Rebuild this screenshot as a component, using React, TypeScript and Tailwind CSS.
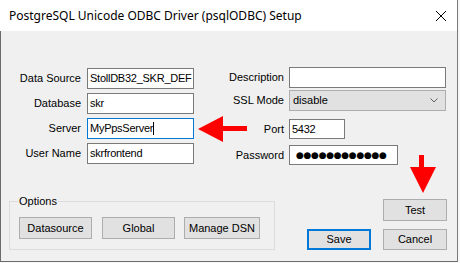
import React from "react";

const ui = "font-['Liberation_Sans',Arial,sans-serif] text-[11px] text-black";

function TextBox({ value, w, focused, caret }: { value: string; w: string; focused?: boolean; caret?: boolean }) {
  return (
    <div
      className={`${w} h-full flex items-center pl-[2px] bg-white border overflow-hidden whitespace-nowrap tracking-[-0.25px] ${
        focused ? "border-[#0078d7]" : "border-[#7a7a7a]"
      }`}
    >
      <span>{value}</span>
      {caret && <span className="inline-block w-px h-[13px] bg-black"></span>}
    </div>
  );
}

function Btn({ label, w, h = "h-[22px]", def }: { label: string; w: string; h?: string; def?: boolean }) {
  return (
    <div
      className={`${w} ${h} flex items-center justify-center bg-[#e1e1e1] ${
        def ? "border-2 border-[#0078d7]" : "border border-[#adadad]"
      }`}
    >
      {label}
    </div>
  );
}

function Label({ text }: { text: string }) {
  return <div className="text-right whitespace-nowrap">{text}</div>;
}

export default function App() {
  return (
    <div className="relative w-[460px] h-[263px] bg-[#f7f7f7] overflow-hidden">
      <div className={`w-[458px] h-[262px] flex flex-col border-r border-[#7a7a7a] ${ui}`}>
        {/* Title bar */}
        <div className="h-[31px] shrink-0 bg-white flex items-center justify-between pl-[9px] pr-[8px]">
          <span className="font-['Noto_Sans',sans-serif] text-[12px] text-black">
            PostgreSQL Unicode ODBC Driver (psqlODBC) Setup
          </span>
          <svg width="12" height="12" viewBox="0 0 12 12" className="mr-[2px]">
            <path d="M1 1 L11 11 M11 1 L1 11" stroke="#000" strokeWidth="1" />
          </svg>
        </div>

        {/* Body */}
        <div className="flex-1 bg-[#f0f0f0] border-l border-b border-[#6b6b6b] flex flex-col">
          <div className="flex pt-[36px]">
            {/* Left column */}
            <div className="ml-[9px] mt-[1px] grid grid-cols-[71px_107px] gap-x-[6px] gap-y-[4px] auto-rows-[21px] items-center">
              <Label text="Data Source" />
              <TextBox value="StollDB32_SKR_DEF" w="w-[107px]" />
              <Label text="Database" />
              <TextBox value="skr" w="w-[107px]" />
              <Label text="Server" />
              <TextBox value="MyPpsServer" w="w-[107px]" focused caret />
              <Label text="User Name" />
              <TextBox value="skrfrontend" w="w-[107px]" />
            </div>

            {/* Right column */}
            <div className="ml-[30px] flex flex-col">
              <div className="h-[21px] flex items-center gap-[5px]">
                <div className="w-[60px] text-right">Description</div>
                <TextBox value="" w="w-[157px]" />
              </div>
              <div className="h-[21px] mt-[2px] flex items-center gap-[5px]">
                <div className="w-[60px] text-right">SSL Mode</div>
                <div className="w-[157px] h-full flex items-center justify-between pl-[3px] pr-[7px] bg-[#e1e1e1] border border-[#adadad]">
                  <span>disable</span>
                  <svg width="8" height="5" viewBox="0 0 8 5">
                    <path d="M0.5 0.5 L4 4 L7.5 0.5" fill="none" stroke="#606060" strokeWidth="1" />
                  </svg>
                </div>
              </div>
              <div className="h-[20px] mt-[8px] flex items-center gap-[5px]">
                <div className="w-[60px] text-right">Port</div>
                <TextBox value="5432" w="w-[56px]" />
              </div>
              <div className="h-[20px] mt-[6px] flex items-center gap-[5px]">
                <div className="w-[60px] text-right">Password</div>
                <div className="w-[109px] h-full flex items-center pl-[6px] bg-white border border-[#7a7a7a] overflow-hidden">
                  <span className="font-['DejaVu_Sans',sans-serif] text-[9px] tracking-[-0.3px] leading-none">
                    ●●●●●●●●●●●●
                  </span>
                </div>
              </div>
            </div>
          </div>

          {/* Bottom area */}
          <div className="flex items-start mt-[34px]">
            <div className="relative ml-[8px] mt-[2px] w-[266px] h-[49px] border border-[#dcdcdc] pl-[9px] pt-[15px]">
              <span className="absolute left-[8px] -top-[7px] px-[1px] bg-[#f0f0f0] leading-[13px]">Options</span>
              <div className="flex">
                <Btn label="Datasource" w="w-[73px]" />
                <div className="ml-[10px]">
                  <Btn label="Global" w="w-[73px]" />
                </div>
                <div className="ml-[9px]">
                  <Btn label="Manage DSN" w="w-[76px]" />
                </div>
              </div>
            </div>
            <div className="ml-[32px] flex flex-col items-end">
              <Btn label="Test" w="w-[64px]" />
              <div className="flex gap-[12px] mt-[8px]">
                <Btn label="Save" w="w-[64px]" h="h-[21px]" def />
                <Btn label="Cancel" w="w-[64px]" h="h-[21px]" />
              </div>
            </div>
          </div>
        </div>
      </div>

      {/* Red annotation arrows */}
      <svg className="absolute inset-0 pointer-events-none" width="460" height="263" viewBox="0 0 460 263">
        <polygon points="198,129 223,116 223,126 247,126 247,131 223,131 223,142" fill="#ff0000" />
        <polygon points="419,155 424,155 424,167 436,167 423,193 410,167 419,167" fill="#ff0000" />
      </svg>
    </div>
  );
}
